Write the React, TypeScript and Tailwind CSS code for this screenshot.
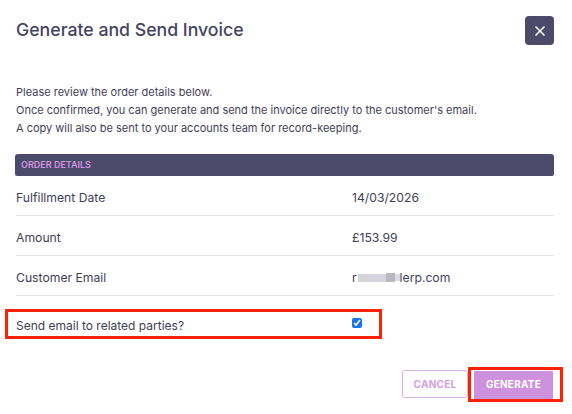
import { X } from "lucide-react";

const rows = [
  { label: "Fulfillment Date", value: "14/03/2026" },
  { label: "Amount", value: "£153.99" },
];

export default function App() {
  return (
    <div className="w-[572px] h-[414px] bg-white pl-4 pr-[18px] font-['Inter',sans-serif] text-[#3f3e57]">
      <div className="flex items-center justify-between pt-4">
        <h1 className="text-[17.7px] font-medium text-[#45445f]">Generate and Send Invoice</h1>
        <button className="w-[29px] h-[29px] rounded bg-[#4c4a6b] flex items-center justify-center text-white">
          <X size={16} strokeWidth={2.5} />
        </button>
      </div>

      <div className="mt-[38px] text-[11px] leading-[18px]">
        <p>Please review the order details below.</p>
        <p>Once confirmed, you can generate and send the invoice directly to the customer's email.</p>
        <p>A copy will also be sent to your accounts team for record-keeping.</p>
      </div>

      <div className="mt-[17px] -ml-px h-[22px] rounded-t-[3px] rounded-b-[2px] bg-[#4c4a6b] flex items-center px-[6px]">
        <span className="text-[9px] font-semibold text-[#d394e0]">ORDER DETAILS</span>
      </div>

      {rows.map((r) => (
        <div key={r.label} className="flex items-center h-[40px] pt-[5px] border-b border-[#e3e3e8] text-[12.2px]">
          <span className="w-[336px]">{r.label}</span>
          <span>{r.value}</span>
        </div>
      ))}
      <div className="flex items-center h-[40px] pt-[5px] border-b border-[#e3e3e8] text-[12.2px]">
        <span className="w-[336px]">Customer Email</span>
        <span className="flex items-center">
          <span>r</span>
          <span className="inline-block w-[28px] h-[8px] bg-[#d4d4da] ml-[1px]" />
          <span className="inline-block w-[9px] h-[9px] bg-[#b9b9c1]" />
          <span className="inline-block w-[5px] h-[7px] bg-[#dcdce0]" />
          <span>lerp.com</span>
        </span>
      </div>

      <div className="mt-[13px] -ml-[11px] w-[377px] h-[30px] border-[3px] border-[#ff2200] flex items-center pl-[8px]">
        <span className="w-[336px] text-[12px] pt-[3px]">Send email to related parties?</span>
        <input type="checkbox" defaultChecked className="w-[10px] h-[10px] accent-[#1a73e8] -mt-[3px]" />
      </div>

      <div className="mt-[28px] -mr-[9px] flex justify-end items-center">
        <button className="w-[66px] h-[28px] rounded-[3px] border border-[#dcb0e6] text-[10px] font-bold tracking-wide text-[#d59de1]">
          CANCEL
        </button>
        <div className="border-[3px] border-[#ff2200] pl-[3px] pr-[7px] bg-white">
          <button className="w-[79px] h-[28px] bg-[#cd91dd] text-[10px] font-bold tracking-wide text-white">
            GENERATE
          </button>
        </div>
      </div>
    </div>
  );
}
